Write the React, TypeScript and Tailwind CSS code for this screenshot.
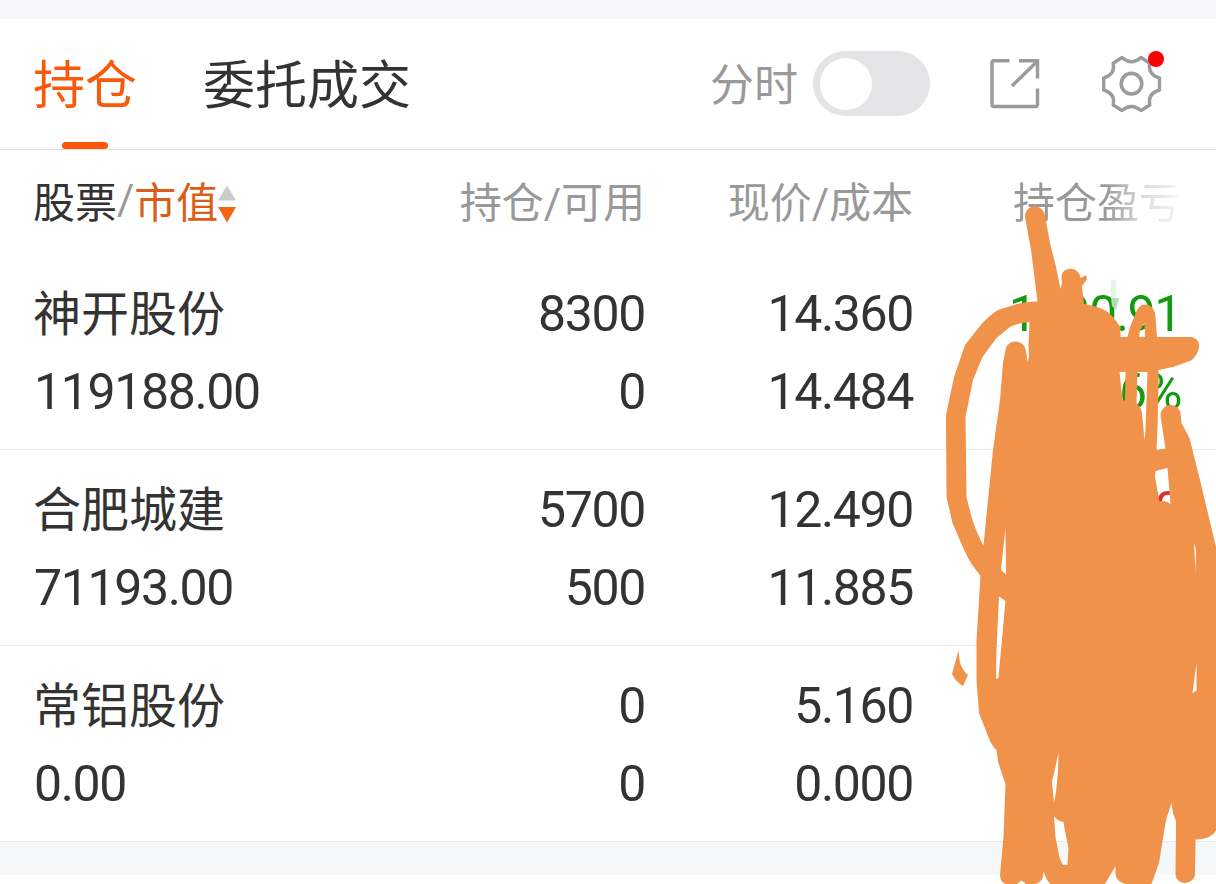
interface Holding {
  name: string;
  marketValue: string;
  amount: string;
  available: string;
  price: string;
  cost: string;
  profit?: string;
  profitRate?: string;
  profitColor?: string;
}

const HOLDINGS: Holding[] = [
  {
    name: "神开股份",
    marketValue: "119188.00",
    amount: "8300",
    available: "0",
    price: "14.360",
    cost: "14.484",
    profit: "-1030.91",
    profitRate: "-0.86%",
    profitColor: "text-[#139a0e]",
  },
  {
    name: "合肥城建",
    marketValue: "71193.00",
    amount: "5700",
    available: "500",
    price: "12.490",
    cost: "11.885",
    profit: "3448.50",
    profitRate: "5.09%",
    profitColor: "text-[#dc2f2f]",
  },
  {
    name: "常铝股份",
    marketValue: "0.00",
    amount: "0",
    available: "0",
    price: "5.160",
    cost: "0.000",
  },
];

const COLS = "grid grid-cols-[311px_300px_268px_268px] pl-[34px]";
const NUM =
  "font-['Roboto','Noto_Sans_CJK_SC',sans-serif] text-[50px] tracking-[-1.35px]";

function ShareIcon() {
  return (
    <svg
      width="52"
      height="52"
      viewBox="989 58 52 52"
      fill="none"
      stroke="#9b9b9b"
      strokeWidth="3.4"
    >
      <path d="M1009.5 60.7H994q-2 0-2 2V104.5q0 2 2 2h41.5q2 0 2-2V88.5M1019 60.7h18.5V78.5M1012 86l25-24.5" />
    </svg>
  );
}

function GearIcon() {
  return (
    <svg
      className="overflow-visible"
      width="64"
      height="64"
      viewBox="1100 51 64 64"
      fill="none"
      stroke="#9b9b9b"
      strokeWidth="3.4"
      strokeLinejoin="round"
    >
      <path d="M1113.2 62.2L1122 56.5Q1131.5 65 1141 56.5L1149.8 62.2Q1147.5 73.5 1159.5 77V89Q1147.5 92.5 1149.8 104L1141 109.5Q1131.5 101.5 1122 109.5L1113.2 104Q1115.5 92.5 1103.7 89V77Q1115.5 73.5 1113.2 62.2Z" />
      <circle cx="1131.5" cy="82.7" r="10.3" strokeWidth="3.6" />
      <circle cx="1156" cy="58" r="8" fill="#ff0000" stroke="none" />
    </svg>
  );
}

function SortArrows() {
  return (
    <svg width="18" height="38" viewBox="0 0 18 38">
      <path d="M9 0.5L18 15.5H0Z" fill="#cbcbcb" />
      <path d="M0 22H18L9 37.5Z" fill="#f56516" />
    </svg>
  );
}

function Slash() {
  return <span className="font-['Roboto',sans-serif]">/</span>;
}

// outline first, then the gaps that stay open between the strokes
const SCRIBBLE = [
  "M1025 217C1025 203 1044 202 1045.5 218L1050 243 1056 267 1060.5 289 1062 283 1061.5 277C1062 266 1079 266 1080.5 278L1083 277C1085 274 1088 276 1086.5 280L1082 286 1084 304Q1092 305 1100 308 1108 311 1113 317L1120.5 327V337H1127.5L1130 327 1137 310C1141 303 1149 303 1153 309Q1155.5 312 1155.5 317L1157 337H1190C1201 338 1201 348 1196 355Q1193 360 1190 361L1173 367 1158.5 370V383L1157.5 430 1156.5 450 1165.5 448.5 1160.5 416C1161 402 1178 402 1180.5 413L1181.5 423 1189.5 438 1200 480 1216 547V830Q1212 839 1195.5 839.5L1195 875C1193 885 1177 886 1175.5 875L1176 821 1173 813 1171.5 803 1166 820 1159 863 1151.5 884H1126Q1117 882 1115.5 875V866L1105 884H1050L1046 878 1043.5 871Q1044 882 1035 884H1026L1021.5 880.5 1017 884H1006Q1000 882 1000 875L1003.5 837 1005.5 784 998 762 996.5 750Q991 745 988 736L979 713 976.5 680V640L980.5 576 971.5 564Q966 555 961.5 544L952.5 523 946.5 497 946 415 954 377 965 345 981.5 324Q990 315 998 310L1017 304Q1027 301 1037.5 301.5L1031 250Z",
  "M1029.5 322Q1018 323 1010 327L996.5 338 982.5 357 973 380 965.5 417 966.5 497 971.5 517Q976 532 983.5 545.5L988 500 993 450 1000 400 1003 363 1005.5 350C1007 339 1024 338 1026 351L1027.5 362 1029 357 1028.5 345Z",
  "M1139 337L1140 330 1144.5 323 1145 337Z",
  "M1119.5 372H1125.5L1125 401 1122.5 400Z",
  "M1137.5 372H1147.5L1145.5 430 1144.5 440 1142 413Q1141 406 1136.5 404Z",
  "M1155.5 471L1167.5 468 1170.5 504Q1166 500 1159.5 501.5L1155 477Z",
  "M1005.5 527.5L1006 574.5 1001 570Z",
  "M999 596.5L1005.5 601 1001 650 998.5 678 996 679 996.5 650Z",
  "M1058.5 753L1058 772 1056 792 1054 803 1052 782Z",
  "M1054 816Q1057 821 1063.5 822L1065 831 1068.5 848 1067.5 865H1063L1059.5 858 1055.5 837Z",
  "M1196.5 663V690.5L1192.5 693Z",
  "M1194 543L1196 550 1195.5 572Z",
  "M958.5 650.5L959.5 660Q961 669 968 675L963 686Q956 682 952 674Z",
].join("");

function Scribble() {
  return (
    <svg
      className="pointer-events-none absolute top-0 left-0"
      width="1216"
      height="884"
      viewBox="0 0 1216 884"
    >
      <path d="M1111 280H1116V298H1111Z" fill="#e6f4e6" />
      <path d="M1111 298H1119L1116 310 1112 306Z" fill="#b5ddb5" />
      <path d={SCRIBBLE} fill="#f1924a" fillRule="evenodd" />
    </svg>
  );
}

export default function App() {
  return (
    <div className="relative h-[884px] w-[1216px] overflow-hidden bg-white font-['Noto_Sans_CJK_SC',sans-serif] text-[#333333]">
      <div className="h-[19px] bg-[#f7f7f9]" />

      <div className="flex h-[131px] border-b border-[#dfdfdf] pl-[33px]">
        <div className="flex w-[104px] flex-col items-center justify-between text-[52px] leading-[125px] text-[#f9590b]">
          <span className="h-[123px] whitespace-nowrap">持仓</span>
          <span className="h-[7px] w-[46px] rounded-full bg-[#fb560a]" />
        </div>
        <div className="ml-[66px] w-[507px] text-[52px] leading-[125px]">
          委托成交
        </div>
        <div className="flex items-center pb-px">
          <span className="w-[103px] pb-[4px] text-[44px] text-[#999999]">
            分时
          </span>
          <div className="flex h-[65px] w-[117px] items-center rounded-full bg-[#e4e4e6] pl-[7px]">
            <div className="size-[52px] rounded-full bg-white" />
          </div>
          <div className="ml-[59px]">
            <ShareIcon />
          </div>
          <div className="ml-[59px]">
            <GearIcon />
          </div>
        </div>
      </div>

      <div
        className={`${COLS} h-[104px] text-right text-[42px] leading-[100px] text-[#999999]`}
      >
        <div className="-ml-px flex h-[100px] items-center">
          <span className="text-[#333333]">股票</span>
          <Slash />
          <span className="text-[#dd5c16]">市值</span>
          <span className="pt-[8px]">
            <SortArrows />
          </span>
        </div>
        <div>
          持仓
          <Slash />
          可用
        </div>
        <div>
          现价
          <Slash />
          成本
        </div>
        <div>
          <span className="bg-linear-to-r from-[#999999] from-55% via-[#dcdcdc] via-78% to-[#f6f6f6] bg-clip-text text-transparent">
            持仓盈亏
          </span>
        </div>
      </div>

      {HOLDINGS.map((h) => (
        <div
          key={h.name}
          className={`${COLS} h-[196px] border-b border-[#ebebeb] pt-[21px] text-right leading-[78px]`}
        >
          <div className="text-left">
            <p className="-ml-px h-[78px] text-[48px] leading-[70px]">
              {h.name}
            </p>
            <p className={NUM}>{h.marketValue}</p>
          </div>
          <div className={NUM}>
            <p>{h.amount}</p>
            <p>{h.available}</p>
          </div>
          <div className={NUM}>
            <p>{h.price}</p>
            <p>{h.cost}</p>
          </div>
          <div className={`${NUM} ${h.profitColor ?? ""}`}>
            <p className="first-letter:tracking-[3px]">{h.profit}</p>
            <p>{h.profitRate}</p>
          </div>
        </div>
      ))}

      <div className="h-[33px] bg-[#f6f7f9]" />
      <Scribble />
    </div>
  );
}
